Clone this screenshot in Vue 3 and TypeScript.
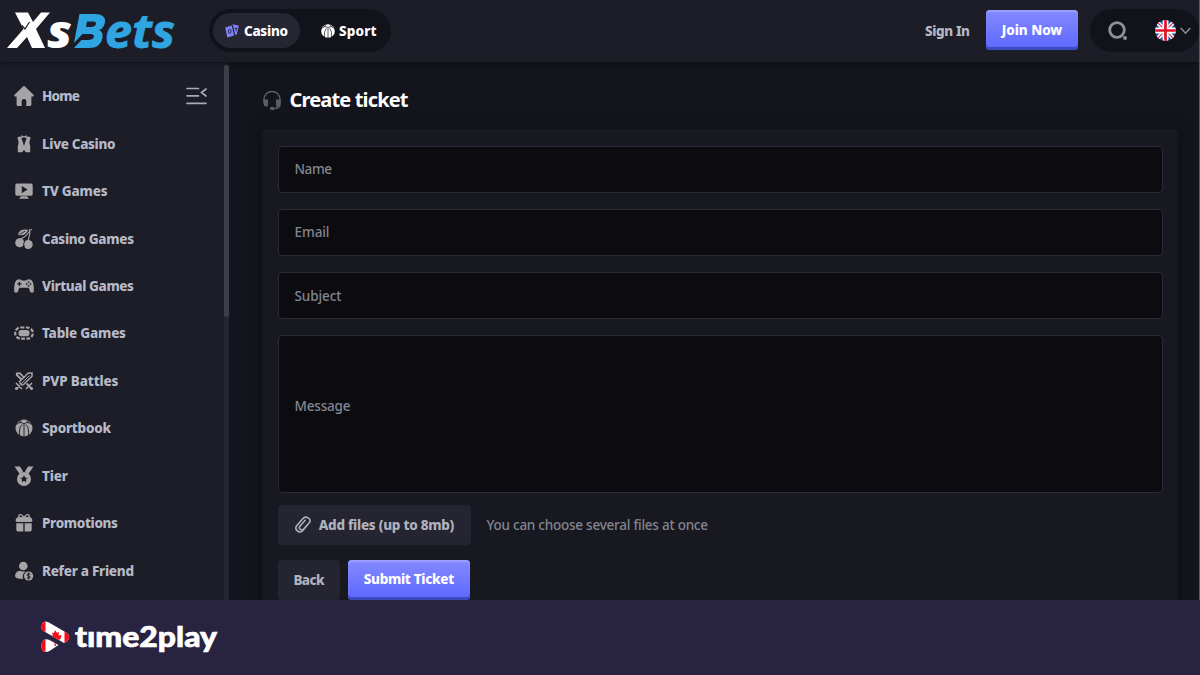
<script setup lang="ts">
import type { Directive } from 'vue'

interface NavItem { label: string; icon: string; width: number }

const nav: NavItem[] = [
  { label: 'Home', icon: 'home', width: 38 },
  { label: 'Live Casino', icon: 'vest', width: 73.5 },
  { label: 'TV Games', icon: 'tv', width: 65.5 },
  { label: 'Casino Games', icon: 'cherry', width: 92 },
  { label: 'Virtual Games', icon: 'pad', width: 92 },
  { label: 'Table Games', icon: 'chip', width: 84 },
  { label: 'PVP Battles', icon: 'swords', width: 76.5 },
  { label: 'Sportbook', icon: 'ball', width: 69 },
  { label: 'Tier', icon: 'medal', width: 26 },
  { label: 'Promotions', icon: 'gift', width: 76 },
  { label: 'Refer a Friend', icon: 'refer', width: 92 },
]

const fields = [
  { label: 'Name', width: 37.5 },
  { label: 'Email', width: 35 },
  { label: 'Subject', width: 47 },
]

// Tracks the letters so that a label takes exactly the given width.
const vFit: Directive<HTMLElement, number> = {
  mounted(el, { value }) {
    const natural = el.getBoundingClientRect().width
    const count = (el.textContent ?? '').length
    const spacing = (value - natural) / Math.max(1, count - 1)
    el.style.letterSpacing = `${spacing}px`
    el.style.marginRight = `${-spacing}px`
  },
}
</script>

<template>
  <div class="page">
    <svg class="defs" width="0" height="0" aria-hidden="true">
      <symbol id="home" viewBox="0 0 20 20">
        <path d="M10 0 11 .4 19.7 9Q20.3 10.3 19 10.6H17.4V18.4Q17.4 20 15.8 20H12.3V15.2Q12.3 13 10 13T7.7 15.2V20H4.2Q2.6 20 2.6 18.4V10.6H1Q-.3 10.3.3 9L9 .4Z" />
      </symbol>
      <symbol id="vest" viewBox="0 0 20 20">
        <path d="M6 2.200 7.300 3.500 10 12 12.700 3.500 14 2.200 16.800 3.800Q14.500 8 16.200 12V18.200H11.700L10 15.800 8.300 18.200H3.800V12Q5.500 8 3.200 3.800ZM7.200 1.300 10 2.300 12.800 1.300V4L10 3.300 7.200 4Z" />
      </symbol>
      <symbol id="tv" viewBox="0 0 20 20">
        <path fill-rule="evenodd" d="M3 2.500H17Q18.700 2.500 18.700 4.200V13Q18.700 14.700 17 14.700H3Q1.300 14.700 1.300 13V4.200Q1.300 2.500 3 2.500ZM7.800 5V12.200L13.500 8.600ZM7 15.300H13L14.500 17V17.700H5.500V17Z" />
      </symbol>
      <symbol id="cherry" viewBox="0 0 20 20">
        <circle cx="5.700" cy="13.800" r="4.500" /><circle cx="14.200" cy="15.500" r="4.500" />
        <path d="M4 6Q5-.5 14 .8 12 7.500 4 6Z" />
        <path class="line" d="M18 .7H15.500Q16.500 5 14.200 11M16 1.500Q12 8 6.500 10" stroke-width="1.100" />
        <path class="cut" d="M5.500 5.500 11 2.200M10.600 12Q8.800 15 10.400 18" stroke-width=".9" />
      </symbol>
      <symbol id="pad" viewBox="0 0 20 20">
        <path d="M3 3.800 6 3.200 7.800 4.400H12.200L14 3.200 17 3.800Q19.200 5 19.800 11V15.400Q18 18 16 15.400L14.800 11.800H5.200L4 15.400Q2 18 .2 15.400V11Q.8 5 3 3.800Z" />
        <path class="cut" d="M5.400 5.800V10M3.300 7.900H7.500" stroke-width="1.200" />
        <circle class="cutfill" cx="14.600" cy="6" r=".85" /><circle class="cutfill" cx="14.600" cy="9.800" r=".85" /><circle class="cutfill" cx="12.700" cy="7.900" r=".85" /><circle class="cutfill" cx="16.500" cy="7.900" r=".85" />
      </symbol>
      <symbol id="chip" viewBox="0 0 20 20">
        <rect class="line" x="1.200" y="4.500" width="17.600" height="11.200" rx="5.500" stroke-width="2.200" stroke-dasharray="3.700 1.500" />
        <rect x="4.500" y="7" width="11" height="6.200" rx="2.800" />
      </symbol>
      <symbol id="swords" viewBox="0 0 20 20">
        <path class="line" d="M17 17 12.500 12.500M7.500 8.500 2.800 4V2.300H6L10 6.500" stroke-width="1.800" />
        <path class="line" d="M11.500 4.500 14.500 1.900H18V5.300L9 14M12 4.500 5 11M2 12 8 18M18 12 12 18M6 14 2.500 17.500M5.500 11.500 8.500 14.500" stroke-width="1.500" />
        <path class="line" d="M15.500 4.500 7 13" stroke-width="1" />
        <circle cx="2.500" cy="17.500" r="1.600" /><circle cx="17.500" cy="17.500" r="1.600" />
      </symbol>
      <symbol id="ball" viewBox="0 0 20 20">
        <circle cx="10" cy="10" r="8.500" />
        <path class="cut" d="M10 6V19M8 6.500Q4.500 10 5.800 18M12 6.500Q15.500 10 14.200 18M2 6.500Q7 5 7.500 1.500M18 6.500Q13 5 12.500 1.500M4.500 4Q10 7 15.500 4" stroke-width=".9" />
      </symbol>
      <symbol id="medal" viewBox="0 0 20 20">
        <path d="M.5.5H6L9 5.500 5.800 8.200ZM19.500.5H14L11 5.500 14.200 8.200Z" />
        <path fill-rule="evenodd" d="M10 6A7 7 0 1 1 10 20 7 7 0 0 1 10 6ZM10 9.200 11.200 11.500 13.600 11.900 11.900 13.600 12.300 16 10 14.900 7.700 16 8.100 13.600 6.400 11.900 8.800 11.500Z" />
      </symbol>
      <symbol id="gift" viewBox="0 0 20 20">
        <path d="M3 4.200H17L18.500 7Q18.500 9 17 9H3Q1.500 9 1.500 7ZM2.300 10.200H9.300V18.500H4Q2.300 18.500 2.300 16.800ZM10.700 10.200H17.700V16.800Q17.700 18.500 16 18.500H10.700Z" />
        <path class="line" d="M9.500 5Q4.500 5 4.700 3 5.500.7 8 2.200L10 4.500 12 2.200Q14.500.7 15.300 3 15.500 5 10.500 5" stroke-width="1.300" />
      </symbol>
      <symbol id="refer" viewBox="0 0 20 20">
        <circle cx="9.300" cy="5" r="4.300" />
        <path d="M1 15Q1.500 10 6 9.800 9 11.300 12 10 7.500 13 9.200 18 1 18 1 15Z" />
        <circle cx="14.600" cy="15" r="4.600" />
        <path class="cut" d="M16.400 13.200Q13 11.900 13 13.800 13 14.600 14.700 15 16.400 15.500 16.200 16.500 15.500 18 12.800 16.800M14.600 11.500V18.500" stroke-width="1" />
      </symbol>
    </svg>

    <header class="topbar">
      <svg class="brand" width="176" height="62" viewBox="0 0 176 62" role="img">
        <g font-family="Open Sans, sans-serif" font-style="italic" font-weight="800">
          <path fill="#fff" d="M15 12.500H28L33 22 41 12.500H50L36 29 45 48H32L27 37 17 48H7L23.500 29Z" />
          <path stroke="#1d1d27" stroke-width="1.200" d="M22 25.500 25 29 29.500 22" fill="none" />
          <text x="47" y="47.500" font-size="46" fill="#fff" textLength="25" lengthAdjust="spacingAndGlyphs">s</text>
          <path fill="#2fa5e2" fill-rule="evenodd" d="M79.500 14H95Q105.500 14 105 22 104 28.500 99 30 103.500 32 102.500 38 100.500 48 89 48H74L81.500 40H89Q93.500 39.500 94 36.500 94 34 90.500 34H82.500L74 43ZM87 21.500 86 27H91.500Q96 26.500 96 23.500 96 21.500 93 21.500Z" />
          <text x="105" y="47.500" font-size="46" font-weight="700" fill="#2fa5e2" stroke="#2fa5e2" stroke-width=".8" textLength="70" lengthAdjust="spacingAndGlyphs">ets</text>
        </g>
      </svg>
      <nav class="switch">
        <a class="tab active">
          <svg width="14" height="14" viewBox="0 0 14 14"><path fill="#7d83fb" d="M.2 3.500 6.800 1.500 9 11.500 2.300 13.500ZM7 .2 13.800 1.500 11.800 10.800 10 10.500 8 1.200Z" /><ellipse cx="4.700" cy="7.300" rx="1.300" ry="2" fill="none" stroke="#292a38" stroke-width="1" /><path d="M9.500 4.300H11.800L10.800 7" fill="none" stroke="#292a38" /></svg>
          <span v-fit="44">Casino</span>
        </a>
        <a class="tab sport">
          <svg width="16" height="16" class="sport-ball"><use href="#ball" /></svg>
          <span v-fit="37.5">Sport</span>
        </a>
      </nav>
      <span class="grow"></span>
      <a class="sign"><span v-fit="45">Sign In</span></a>
      <button class="primary join"><span v-fit="60.5">Join Now</span></button>
      <div class="tools">
        <svg width="20" height="20" viewBox="0 0 20 20" fill="none" stroke="#8e909b"><circle cx="9" cy="9" r="7.300" stroke-width="2.800" /><circle cx="17" cy="17" r="1.100" stroke-width="1.800" fill="#8e909b" /></svg>
        <svg class="flag" width="21" height="21" viewBox="0 0 20 20"><defs><clipPath id="round"><circle cx="10" cy="10" r="10" /></clipPath></defs><g clip-path="url(#round)"><path fill="#1d54a2" d="M0 0H20V20H0Z" /><path stroke="#fff" stroke-width="4" d="M0 0 20 20M20 0 0 20" /><path stroke="#df2037" stroke-width="1.100" d="M0 0 20 20M20 0 0 20" /><path stroke="#fff" stroke-width="5.500" d="M10 0V20M0 10H20" /><path stroke="#df142d" stroke-width="2.600" d="M10 0V20M0 10H20" /></g></svg>
        <svg width="11" height="8" viewBox="0 0 11 8" fill="none" stroke="#8e909b" stroke-width="1.500"><path d="M.7 1 5.500 6.200 10.300 1" /></svg>
      </div>
    </header>

    <div class="body">
      <aside class="sidebar">
        <ul class="menu">
          <li v-for="item in nav" :key="item.label">
            <svg width="20" height="20"><use :href="'#' + item.icon" /></svg>
            <span v-fit="item.width">{{ item.label }}</span>
          </li>
        </ul>
        <svg class="collapse" width="22" height="18" viewBox="0 0 22 18" fill="none" stroke="#a5acba" stroke-width="1.700" stroke-linecap="round"><path d="M1 1.500H12.500M1 8.800H12.500M1 16.300H20M20 2 15.500 5.500 20 9" /></svg>
        <div class="track"><div class="thumb"></div></div>
      </aside>

      <main class="content">
        <h1>
          <svg width="18" height="20" viewBox="0 0 18 20"><path fill="none" stroke="#5c5d67" stroke-width="1.500" d="M1 11V8.500A8 8 0 0 1 17 8.500V13Q17 17 12 17.500" /><path fill="#5c5d67" d="M.4 8.500H5V15.500H3Q.4 15 .4 12.500ZM17.600 8.500H13V15.500H15Q17.600 15 17.600 12.500ZM7 16H11.500V19H8Q7 18.500 7 17Z" /></svg>
          <span v-fit="119">Create ticket</span>
        </h1>
        <section class="card">
          <div v-for="field in fields" :key="field.label" class="field"><span v-fit="field.width">{{ field.label }}</span></div>
          <div class="field message"><span v-fit="56">Message</span></div>
          <div class="files">
            <button class="plain add">
              <svg width="16" height="18" viewBox="0 0 16 18" fill="none" stroke="#adb0bb" stroke-width="1.600" stroke-linecap="round"><path d="M12.800 8.500 7.800 14.600C5.500 17.800-.8 14.500 1.300 10.300L8.200 2.300C11-.5 16.500 2.600 14.600 6.300L8.600 13C6.500 15 3.300 12.800 4.700 10.400L10.200 4.300" /></svg>
              <span v-fit="135.5">Add files (up to 8mb)</span>
            </button>
            <span class="hint" v-fit="221.5">You can choose several files at once</span>
          </div>
          <div class="actions">
            <button class="plain back"><span v-fit="31">Back</span></button>
            <button class="primary submit"><span v-fit="90.5">Submit Ticket</span></button>
          </div>
        </section>
      </main>
    </div>

    <footer class="footer">
      <svg width="190" height="50" viewBox="0 0 190 50" role="img">
        <defs><clipPath id="mark"><path d="M1.500 8Q1.500-.5 8.500 2.200L27 13Q31.500 17 27 21.500L24 23 3.500 11Q1.500 10 1.500 8ZM1.500 24Q3.500 17.500 9.500 20L18.500 25 9.500 31Q1.500 34 1.500 27Z" /></clipPath></defs>
        <g clip-path="url(#mark)"><path fill="#fff" d="M0 0H32V34H0Z" /><path fill="#f80b17" d="M0 0H5.500V34H0ZM24.500 0H32V34H24.500ZM15 10 17 13 19 12 18.500 15.500 21.500 15 20.500 19 15.500 22 16 26H14.500V22L9.500 20 10.500 18 9.500 15.500 13 15.500 12 12.500 14 13Z" /></g>
        <text class="wordmark" x="35" y="26.500" textLength="142" lengthAdjust="spacingAndGlyphs">tıme2play</text>
      </svg>
    </footer>
    <div class="edge"></div>
  </div>
</template>

<style>
body { margin: 0; background: #282340; }
</style>

<style scoped>
* { box-sizing: border-box; }
.page { position: relative; width: 1200px; height: 675px; overflow: hidden; display: flex; flex-direction: column; background: #14141c; font: 800 13.5px/20px "Noto Sans", "Open Sans", sans-serif; color: #b6bac8; }
.defs { position: absolute; }
span { white-space: nowrap; display: inline-block; }
svg { flex: none; display: block; }
button { font: inherit; border: 0; padding: 0; display: flex; align-items: center; justify-content: center; }
.line { fill: none; stroke: #a5a5a8; }
.cut { fill: none; stroke: #1d1d27; }
.cutfill { fill: #1d1d27; }
.topbar { height: 62px; flex: none; display: flex; align-items: flex-start; background: #1d1d27; position: relative; box-shadow: 0 1px 3px #0d0e14; }
.brand { margin-right: 33px; }
.switch { margin-top: 9px; width: 182px; height: 43px; padding: 4px; border-radius: 22px; background: #12121a; display: flex; }
.tab { width: 87px; height: 35px; border-radius: 18px; display: flex; align-items: center; padding-left: 12px; gap: 5px; color: #fff; }
.tab.active { background: #252631; }
.tab.sport { gap: 3px; padding-left: 20px; }
.sport-ball { fill: #fff; }
.grow { flex: 1; }
.sign { margin: 21px 16px 0 0; }
.primary { color: #fff; border-radius: 4px; background: linear-gradient(#858aff, #5c67ff); box-shadow: inset 0 2px 1px #9b9eff, inset 0 -3px 0 #3b4bc0; }
.join { width: 92px; height: 40px; margin-top: 10px; margin-right: 12px; padding-bottom: 1px; }
.tools { width: 109px; height: 43px; margin: 9px 1px 0 0; border-radius: 22px; background: #12121a; display: flex; align-items: center; padding-left: 18px; }
.flag { margin: 0 4px 0 27px; }
.body { height: 538px; flex: none; display: flex; overflow: hidden; }
.sidebar { width: 229px; flex: none; display: flex; background: #1d1d27; }
.menu { margin: 0; padding: 10.5px 0 0 14px; list-style: none; width: 186px; }
.menu li { display: flex; align-items: center; height: 47.45px; gap: 8px; fill: #a5a5a8; }
.collapse { margin-top: 25px; }
.track { margin: 3px 0 0 16px; width: 5px; background: #242531; }
.thumb { height: 252px; background: #3d3e49; border-radius: 3px; }
.content { padding: 25px 22px 0 33px; flex: 1; }
h1 { margin: 0; display: flex; align-items: center; height: 25px; gap: 8.5px; color: #fff; font-size: 20px; }
h1 svg { margin: 2px 0 0 1px; }
.card { margin-top: 17px; height: 500px; padding: 16.500px 15px 0 16px; background: #181821; border-radius: 5px; box-shadow: 0 0 13px #101116; }
.field { height: 47.3px; margin-bottom: 15.900px; padding-left: 15.500px; display: flex; align-items: center; border: 1px solid #292a35; border-radius: 4px; background: #0c0c10; color: #83858f; font-weight: 500; }
.message { height: 158px; margin-bottom: 12px; padding-bottom: 17px; }
.files { display: flex; align-items: center; height: 40px; gap: 15.500px; }
.plain { height: 40px; border-radius: 4px; background: #242530; color: #b0b2be; }
.add { width: 193px; gap: 8px; }
.hint { color: #83858f; font-weight: 500; }
.actions { display: flex; gap: 8px; margin-top: 15px; }
.back { width: 62px; }
.submit { width: 122px; height: 40px; padding-bottom: 2px; }
.footer { height: 75px; flex: none; background: #282340; padding: 20px 0 0 40px; }
.wordmark { font-family: Lato, sans-serif; font-weight: 900; font-size: 29px; font-variant-ligatures: none; fill: #fff; stroke: #fff; stroke-width: .7px; }
.edge { position: absolute; right: 0; top: 0; width: 1px; height: 600px; background: #5b5b63; }
</style>
